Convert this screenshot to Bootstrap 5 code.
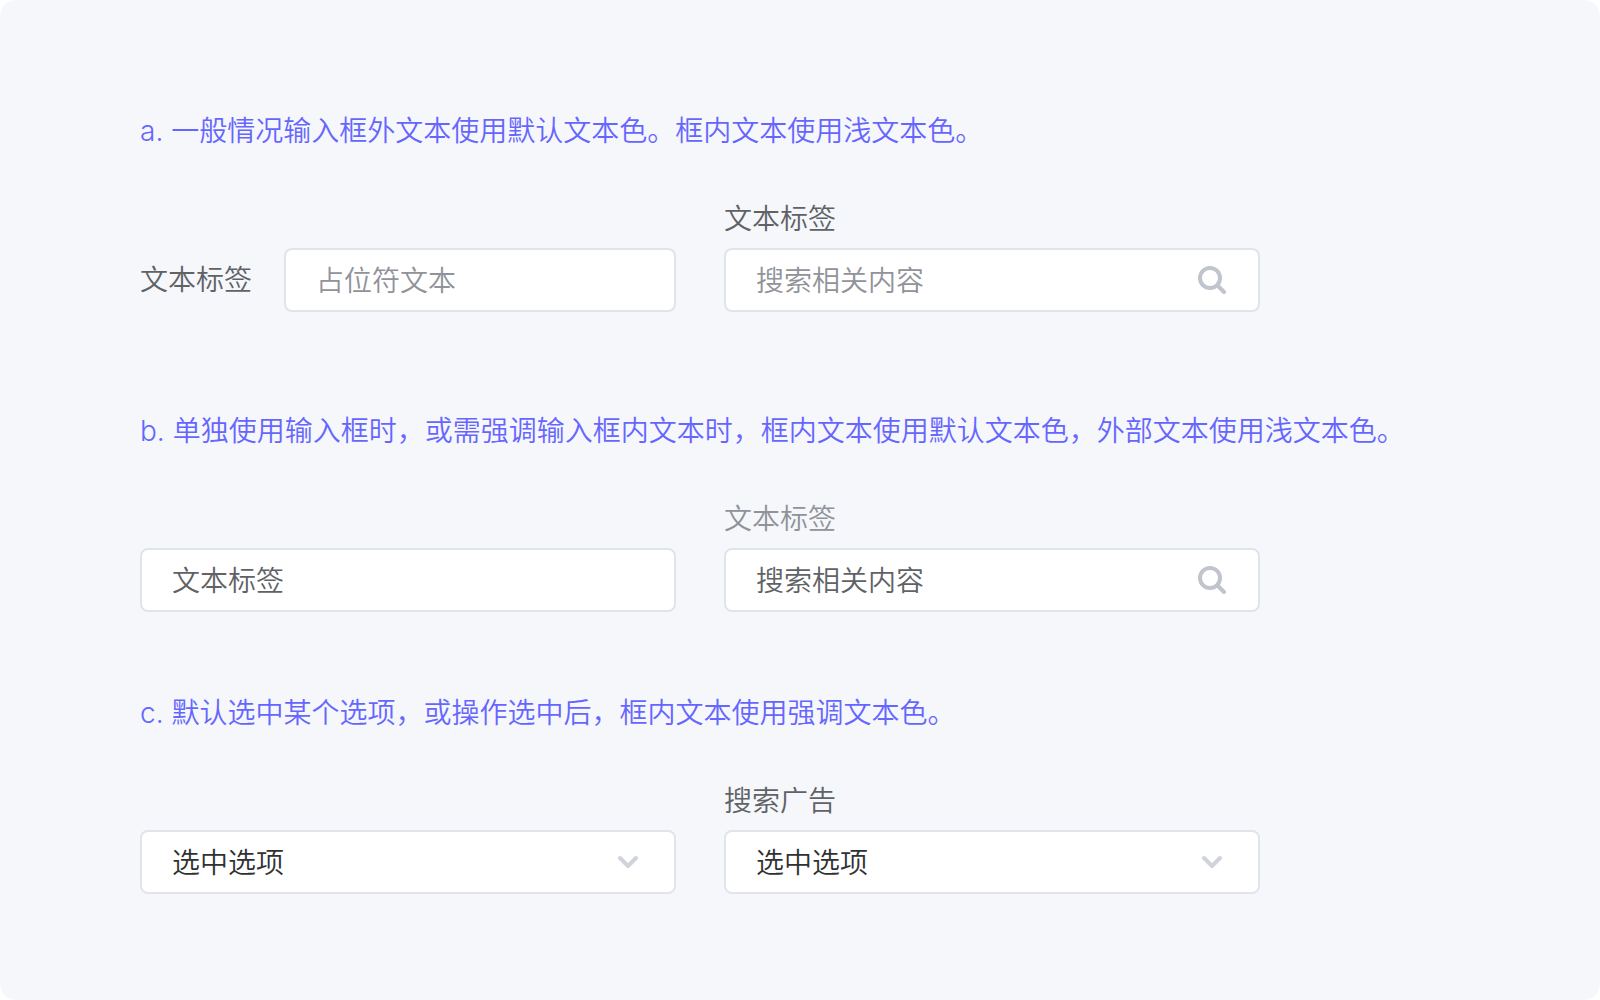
<!DOCTYPE html>
<html lang="zh-CN">
<head>
<meta charset="utf-8">
<meta name="viewport" content="width=device-width, initial-scale=1">
<title>输入框文本色</title>
<link href="https://cdn.jsdelivr.net/npm/bootstrap@5.3.0/dist/css/bootstrap.min.css" rel="stylesheet">
<style>
  body { background: #fff; font: 350 28px/40px Inter, "Noto Sans CJK SC", sans-serif; }
  .board { background: #f5f7fb; border-radius: 16px; min-height: 100vh; padding: 111px 140px 104px; }
  .rule-title { font-size: 28px; line-height: 40px; font-weight: 350; color: #6666ff; margin: 0 0 48px; }
  .rules { max-width: 1320px; }
  .rule + .rule { margin-top: 99px; }
  .rule + .rule.rule-near { margin-top: 81px; }
  .fields { max-width: 1168px; --bs-gutter-x: 48px; }
  .field-label { color: #606266; margin: 0; white-space: nowrap; }
  .field-label.soft { color: #909399; }
  .stacked { margin-bottom: 9px; }
  .inline-field { gap: 32px; }
  .form-control.box, .form-select.box {
    height: 64px; border: 2px solid #e1e4eb; border-radius: 8px; padding: 9px 30px 11px;
    font: inherit; font-family: "Noto Sans CJK SC", sans-serif;
    color: #606266; background-color: #fff; background-image: none;
  }
  .form-control.box::placeholder { color: #909399; opacity: 1; }
  .form-control.box.with-icon, .form-select.box { padding-right: 74px; }
  .form-select.box { color: #303133; }
  .box-icon { width: 28px; height: 28px; right: 34px; color: #c0c4cc; pointer-events: none; }
  .box-icon.arrow { color: #d0d3db; }
</style>
<script src="https://cdn.jsdelivr.net/npm/bootstrap@5.3.0/dist/js/bootstrap.bundle.min.js"></script>
</head>
<body>
<main class="board">
  <div class="rules">
    <section class="rule">
      <h2 class="rule-title">a. 一般情况输入框外文本使用默认文本色。框内文本使用浅文本色。</h2>
      <div class="row fields align-items-end">
        <div class="col-6">
          <div class="d-flex align-items-center inline-field">
            <label class="field-label" for="a1">文本标签</label>
            <input class="form-control box" id="a1" type="text" placeholder="占位符文本">
          </div>
        </div>
        <div class="col-6">
          <label class="field-label d-block stacked" for="a2">文本标签</label>
          <div class="position-relative">
            <input class="form-control box with-icon" id="a2" type="text" placeholder="搜索相关内容">
            <svg class="box-icon position-absolute top-50 translate-middle-y" viewBox="0 0 28 28" fill="none" stroke="currentColor" stroke-width="4" stroke-linecap="round" aria-hidden="true"><circle cx="12" cy="12" r="10"/><path d="M19.5 19.5L26 26"/></svg>
          </div>
        </div>
      </div>
    </section>

    <section class="rule">
      <h2 class="rule-title">b. 单独使用输入框时，或需强调输入框内文本时，框内文本使用默认文本色，外部文本使用浅文本色。</h2>
      <div class="row fields align-items-end">
        <div class="col-6">
          <input class="form-control box" type="text" value="文本标签" aria-label="文本标签">
        </div>
        <div class="col-6">
          <label class="field-label soft d-block stacked" for="b2">文本标签</label>
          <div class="position-relative">
            <input class="form-control box with-icon" id="b2" type="text" value="搜索相关内容">
            <svg class="box-icon position-absolute top-50 translate-middle-y" viewBox="0 0 28 28" fill="none" stroke="currentColor" stroke-width="4" stroke-linecap="round" aria-hidden="true"><circle cx="12" cy="12" r="10"/><path d="M19.5 19.5L26 26"/></svg>
          </div>
        </div>
      </div>
    </section>

    <section class="rule rule-near">
      <h2 class="rule-title">c. 默认选中某个选项，或操作选中后，框内文本使用强调文本色。</h2>
      <div class="row fields align-items-end">
        <div class="col-6">
          <div class="position-relative">
            <select class="form-select box" aria-label="选中选项"><option>选中选项</option></select>
            <svg class="box-icon arrow position-absolute top-50 translate-middle-y" viewBox="0 0 28 28" fill="none" stroke="currentColor" stroke-width="4" stroke-linecap="round" stroke-linejoin="round" aria-hidden="true"><path d="M6 10l8 8 8-8"/></svg>
          </div>
        </div>
        <div class="col-6">
          <label class="field-label d-block stacked" for="c2">搜索广告</label>
          <div class="position-relative">
            <select class="form-select box" id="c2"><option>选中选项</option></select>
            <svg class="box-icon arrow position-absolute top-50 translate-middle-y" viewBox="0 0 28 28" fill="none" stroke="currentColor" stroke-width="4" stroke-linecap="round" stroke-linejoin="round" aria-hidden="true"><path d="M6 10l8 8 8-8"/></svg>
          </div>
        </div>
      </div>
    </section>
  </div>
</main>
</body>
</html>
